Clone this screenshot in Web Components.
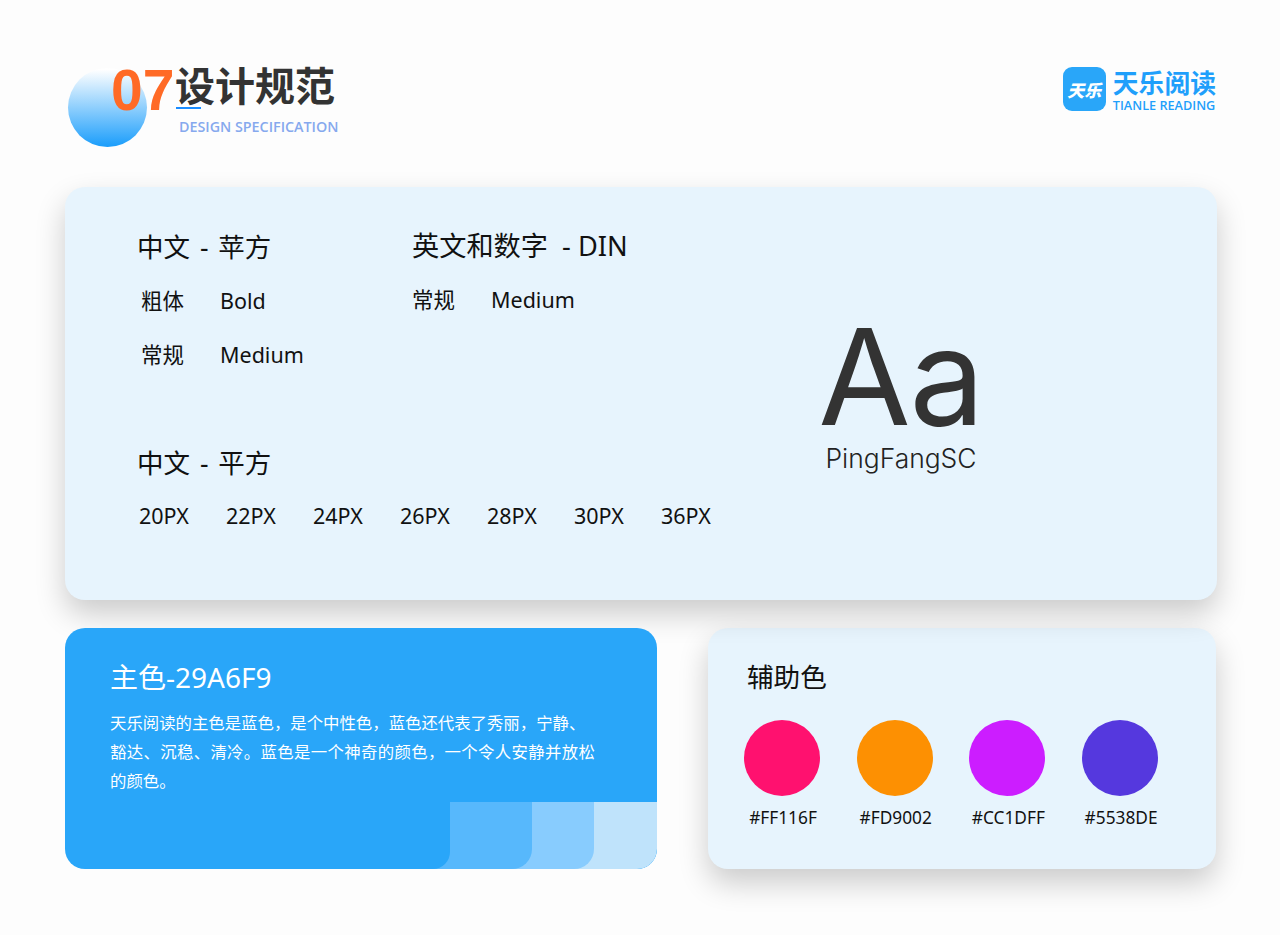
<!DOCTYPE html>
<html lang="zh"><head><meta charset="utf-8"><title>设计规范</title>
<style>
html,body{margin:0;padding:0;background:#fdfdfd;}
body{font-family:"Noto Sans","Noto Sans CJK SC",sans-serif;color:#111;width:1280px;height:935px;overflow:hidden;}
</style></head><body>
<ds-page>
  <ds-header slot="header"></ds-header>
  <spec-card slot="spec"></spec-card>
  <main-color slot="main"></main-color>
  <aux-colors slot="aux"></aux-colors>
</ds-page>
<script>
const CJK='"Noto Sans CJK SC",sans-serif';
const LAT='"Noto Sans","Noto Sans CJK SC",sans-serif';
function def(name,html){customElements.define(name,class extends HTMLElement{constructor(){super();this.attachShadow({mode:'open'}).innerHTML=html;}});}
def('ds-page',`<style>
:host{display:block;width:1280px;height:935px;box-sizing:border-box;padding:65px 63px 0 65px;}
.bottom{display:flex;justify-content:space-between;margin-top:28px;padding-right:1px;}
</style><slot name="header"></slot><slot name="spec"></slot><div class="bottom"><slot name="main"></slot><slot name="aux"></slot></div>`);
def('ds-title',`<style>
:host{display:block;position:relative;padding-left:46px;height:82px;}
.circle{position:absolute;left:3px;top:3px;width:79px;height:79px;border-radius:50%;background:linear-gradient(180deg,#fff 2%,#1a9dfb 100%);}
.row{position:relative;display:flex;align-items:flex-start;height:42px;}
.no{font:700 57px/42px "Liberation Sans",sans-serif;color:#ff6a26;width:64px;margin-top:4px}
.t{font:700 40px/42px "Noto Sans CJK SC",sans-serif;color:#333;margin-top:-2px;}
.line{position:relative;margin-left:65px;width:25px;height:2px;background:#1a8cff;}
.en{position:relative;margin:8px 0 0 68px;font:600 14.3px/19px "Open Sans",sans-serif;color:#86a9ee;white-space:nowrap;}
</style><div class="circle"></div><div class="row"><div class="no">07</div><div class="t">设计规范</div></div><div class="line"></div><div class="en">DESIGN SPECIFICATION</div>`);
def('ds-logo',`<style>
:host{display:flex;gap:7px;align-items:flex-start;margin:2px 1px 0 0;}
.icon{width:43px;height:44px;border-radius:9px;background:#29a6f9;display:flex;align-items:center;justify-content:center;color:#fff;font:italic 900 17px/1 "Noto Sans CJK SC",sans-serif;}
.cn{font:700 25.8px/29px "Noto Sans CJK SC",sans-serif;color:#1f9ffb;white-space:nowrap;}
.en{font:600 12.7px/17px "Open Sans",sans-serif;color:#1f9ffb;white-space:nowrap;margin-top:1px}
</style><div class="icon">天乐</div><div><div class="cn">天乐阅读</div><div class="en">TIANLE READING</div></div>`);
def('ds-header',`<style>
:host{display:flex;justify-content:space-between;align-items:flex-start;height:122px;}
</style><ds-title></ds-title><ds-logo></ds-logo>`);
def('spec-heading',`<style>
:host{display:block;font:400 var(--fs,27.2px)/36px ${LAT};word-spacing:var(--ws,0);color:#111;white-space:pre;}
</style><slot></slot>`);
def('spec-row',`<style>
:host{display:flex;font:400 21.5px/30px ${LAT};color:#111;white-space:nowrap;}
::slotted(span:first-child){width:79px;}
</style><slot></slot>`);
def('spec-card',`<style>
:host{display:block;box-sizing:border-box;height:413px;background:#e7f4fd;border-radius:20px;box-shadow:0 14px 30px rgba(0,0,0,.2);padding:42px 0 0 73px;position:relative;font-family:${LAT};}
.grid{display:flex;height:216px;}
.c1{width:274px;}
.cn{--fs:26.5px;--ws:3px;margin-left:-1px;}
.c1 spec-row{margin:21px 0 0 3px;}
.c1 spec-row+spec-row{margin-top:24px;}
.c2{margin-top:-1px}
.c2 spec-row{margin-top:21px;}
.sizes{display:grid;grid-template-columns:repeat(7,87px);margin:20px 0 0 1px;font:400 21.5px/30px ${LAT};color:#111;}
.aa{position:absolute;left:700px;top:129px;width:272px;text-align:center;color:#333;}
.aa b{display:block;font:400 134px/120px Inter,sans-serif;letter-spacing:-1px;}
.aa span{display:block;font:300 26.4px/30px Inter,sans-serif;margin-top:7px;color:#222;}
</style>
<div class="grid"><div class="c1"><spec-heading class="cn">中文 - 苹方</spec-heading><spec-row><span>粗体</span><span>Bold</span></spec-row><spec-row><span>常规</span><span>Medium</span></spec-row></div>
<div class="c2"><spec-heading>英文和数字  - DIN</spec-heading><spec-row><span>常规</span><span>Medium</span></spec-row></div></div>
<spec-heading class="cn">中文 - 平方</spec-heading>
<div class="sizes"><span>20PX</span><span>22PX</span><span>24PX</span><span>26PX</span><span>28PX</span><span>30PX</span><span>36PX</span></div>
<div class="aa"><b>Aa</b><span>PingFangSC</span></div>`);
def('main-color',`<style>
:host{display:block;position:relative;box-sizing:border-box;width:592px;height:241px;background:#29a6f9;border-radius:20px;padding:31px 0 0 45px;color:#fff;overflow:hidden;}
h2{margin:0;font:400 28px/36px ${LAT};}
p{margin:13px 0 0;font:400 16.4px/29px ${CJK};white-space:nowrap;}
p span{letter-spacing:.34px}
.tabs{position:absolute;left:368px;right:0;bottom:0;height:67px;}
.t{position:absolute;left:0;top:0;bottom:0;border-bottom-right-radius:20px;}
.a{right:0;background:#bfe3fb}.b{width:161px;background:#88ccfe}.c{width:99px;background:#57b8fc}.d{width:17px;background:#29a6f9}
</style><h2>主色-29A6F9</h2><p>天乐阅读的主色是蓝色，是个中性色，蓝色还代表了秀丽，宁静、<br><span>豁达、沉稳、清冷。蓝色是一个神奇的颜色，一个令人安静并放松</span><br>的颜色。</p>
<div class="tabs"><div class="t a"></div><div class="t b"></div><div class="t c"></div><div class="t d"></div></div>`);
customElements.define('color-swatch',class extends HTMLElement{constructor(){super();const c=this.getAttribute('color');this.attachShadow({mode:'open'}).innerHTML=`<style>
:host{display:block;width:76px;font:400 17.3px/24px ${LAT};color:#111;}
.d{width:76px;height:76px;border-radius:50%;background:${c};}
.l{margin-top:10px;text-align:center;white-space:nowrap;margin-left:-9px;margin-right:-11px;}
</style><div class="d"></div><div class="l">${c}</div>`;}});
def('aux-colors',`<style>
:host{display:block;box-sizing:border-box;width:508px;height:241px;background:#e7f4fd;border-radius:20px;box-shadow:0 14px 30px rgba(0,0,0,.2);padding:31px 0 0 36px;}
h2{margin:0 0 25px 3px;font:400 26.6px/36px ${LAT};color:#111;}
.r{display:flex;gap:36.7px;}
</style><h2>辅助色</h2><div class="r"><color-swatch color="#FF116F"></color-swatch><color-swatch color="#FD9002"></color-swatch><color-swatch color="#CC1DFF"></color-swatch><color-swatch color="#5538DE"></color-swatch></div>`);
</script>
</body></html>
